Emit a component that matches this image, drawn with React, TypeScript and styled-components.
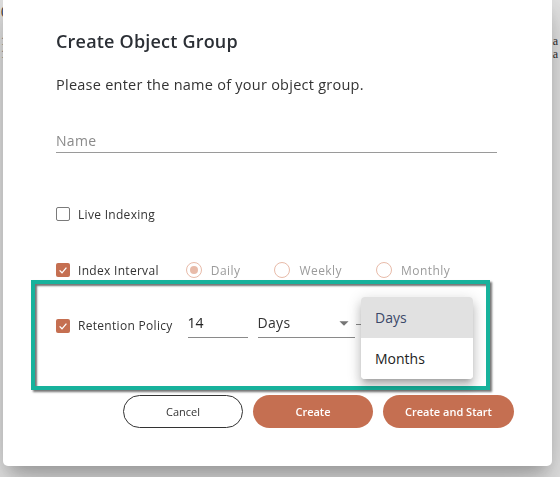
import React, { useState } from 'react'
import styled, { createGlobalStyle } from 'styled-components'

const GlobalStyle = createGlobalStyle`
  html, body {
    margin: 0;
    padding: 0;
    background: #ffffff;
  }
  * {
    box-sizing: border-box;
  }
`

const PRIMARY = '#c56f51'
const FONT = `'Open Sans', 'Noto Sans', sans-serif`

const Page = styled.div`
  font-family: 'Liberation Serif', serif;
  font-size: 12px;
  color: #333;
  height: 477px;
  overflow: hidden;
  padding: 5px 2px 0 1px;
`

const PageLine = styled.div<{ $gap?: number }>`
  display: flex;
  justify-content: space-between;
  margin-top: ${(p) => p.$gap ?? 0}px;
  line-height: 13px;
`

const Backdrop = styled.div`
  position: fixed;
  inset: 0;
  background: rgba(0, 0, 0, 0.09);
`

const DialogPaper = styled.div`
  position: absolute;
  left: 3px;
  top: -6px;
  width: 549px;
  background: #fff;
  border-radius: 5px;
  box-shadow: 0px 11px 15px -7px rgba(0, 0, 0, 0.2), 0px 24px 38px 3px rgba(0, 0, 0, 0.14),
    0px 9px 46px 8px rgba(0, 0, 0, 0.12);
  padding: 35px 55px 38px 53px;
  font-family: ${FONT};
  display: flex;
  flex-direction: column;
`

const Title = styled.h2`
  margin: 0;
  font-size: 18px;
  line-height: 24px;
  font-weight: 600;
  letter-spacing: 0.2px;
  color: #2b2f35;
`

const Subtitle = styled.p`
  margin: 22px 0 0 0;
  font-size: 14.5px;
  line-height: 20px;
  letter-spacing: 0.25px;
  color: #333;
`

const NameInput = styled.input`
  margin-top: 33px;
  height: 25px;
  border: none;
  border-bottom: 1px solid #9a9a9a;
  padding: 0;
  font-family: ${FONT};
  font-size: 14px;
  letter-spacing: 0.3px;
  color: #333;
  outline: none;
  background: transparent;

  &::placeholder {
    color: #8a8a8a;
  }
`

const OptionRow = styled.div<{ $top: number }>`
  display: flex;
  align-items: center;
  height: 20px;
  margin-top: ${(p) => p.$top}px;
`

const CheckLabel = styled.label`
  display: flex;
  align-items: center;
  gap: 8px;
  font-size: 12px;
  letter-spacing: 0.3px;
  color: #333;
  cursor: pointer;
`

const CheckBox = styled.span<{ $checked: boolean }>`
  width: 14px;
  height: 14px;
  border-radius: 2px;
  display: inline-flex;
  align-items: center;
  justify-content: center;
  background: ${(p) => (p.$checked ? PRIMARY : '#fff')};
  border: ${(p) => (p.$checked ? 'none' : '1.5px solid #7a7a7a')};
`

const RadioGroup = styled.div`
  display: flex;
  align-items: center;
  gap: 34px;
  margin-left: 27px;
`

const RadioOption = styled.label`
  display: flex;
  align-items: center;
  gap: 9px;
  font-size: 12px;
  letter-spacing: 0.45px;
  color: #9b9b9b;
`

const RadioCircle = styled.span<{ $selected: boolean }>`
  width: 16px;
  height: 16px;
  border-radius: 50%;
  border: 1.5px solid #e8bba9;
  display: inline-flex;
  align-items: center;
  justify-content: center;

  &::after {
    content: '';
    width: 8px;
    height: 8px;
    border-radius: 50%;
    background: ${(p) => (p.$selected ? '#e8bba9' : 'transparent')};
  }
`

const HighlightBox = styled.div`
  position: relative;
  margin: 0 7px 0 -25px;
  height: 110px;
  border: 4px solid #17b29c;
  box-shadow: 2px 2px 2px rgba(0, 0, 0, 0.55), inset 2px 2px 2px rgba(0, 0, 0, 0.55);
  padding: 29px 0 0 21px;
`

const RetentionRow = styled.div`
  display: flex;
  align-items: center;
  height: 25px;
`

const NumberField = styled.input`
  width: 60px;
  height: 25px;
  margin-left: 15px;
  border: none;
  border-bottom: 1px solid #8a8a8a;
  padding: 0 0 5px 0;
  font-family: ${FONT};
  font-size: 14px;
  color: #222;
  outline: none;
  background: transparent;
`

const SelectBox = styled.div`
  position: relative;
  width: 97px;
  height: 25px;
  margin-left: 10px;
  border-bottom: 1px solid #8a8a8a;
  display: flex;
  align-items: center;
  justify-content: space-between;
  padding-bottom: 5px;
  font-size: 14px;
  letter-spacing: 0.3px;
  color: #333;
`

const SelectTail = styled.span`
  width: 6px;
  height: 1px;
  background: #8a8a8a;
  margin-left: 1px;
  margin-top: -2px;
`

const Menu = styled.ul`
  position: absolute;
  left: 326px;
  top: 13px;
  width: 112px;
  margin: 0;
  padding: 0;
  list-style: none;
  background: #fff;
  border-radius: 4px;
  box-shadow: 0px 5px 5px -3px rgba(0, 0, 0, 0.2), 0px 8px 10px 1px rgba(0, 0, 0, 0.14),
    0px 3px 14px 2px rgba(0, 0, 0, 0.12);
  overflow: hidden;
`

const MenuItem = styled.li<{ $selected?: boolean }>`
  height: 41px;
  display: flex;
  align-items: center;
  padding-left: 14px;
  font-size: 14px;
  color: ${(p) => (p.$selected ? '#3b4869' : '#222')};
  background: ${(p) => (p.$selected ? '#e1e1e1' : '#fff')};
`

const Actions = styled.div`
  display: flex;
  justify-content: flex-end;
  gap: 10px;
  margin: 5px -17px 0 0;
`

const PillButton = styled.button<{ $variant: 'outline' | 'filled'; $width: number }>`
  width: ${(p) => p.$width}px;
  height: 33px;
  border-radius: 17px;
  font-family: ${FONT};
  font-size: 11px;
  font-weight: ${(p) => (p.$variant === 'filled' ? 600 : 400)};
  color: ${(p) => (p.$variant === 'filled' ? '#fff' : '#333')};
  background: ${(p) => (p.$variant === 'filled' ? PRIMARY : '#fff')};
  border: ${(p) => (p.$variant === 'filled' ? 'none' : '1px solid #333')};
  cursor: pointer;
`

function Check({ checked }: { checked: boolean }) {
  return (
    <CheckBox $checked={checked}>
      {checked && (
        <svg width="14" height="14" viewBox="0 0 14 14">
          <polyline points="3.6,7.4 6,9.8 10.4,4.6" fill="none" stroke="#fff" strokeWidth="1.3" />
        </svg>
      )}
    </CheckBox>
  )
}

export default function App(): React.ReactElement {
  const [interval] = useState('Daily')

  return (
    <>
      <GlobalStyle />
      <Page>
        <PageLine><span>(</span><span></span></PageLine>
        <PageLine $gap={17}><span>1</span><span>a</span></PageLine>
        <PageLine><span>1</span><span>a</span></PageLine>
      </Page>
      <Backdrop>
        <DialogPaper>
          <Title>Create Object Group</Title>
          <Subtitle>Please enter the name of your object group.</Subtitle>
          <NameInput placeholder="Name" />

          <OptionRow $top={51}>
            <CheckLabel><Check checked={false} />Live Indexing</CheckLabel>
          </OptionRow>

          <OptionRow $top={36}>
            <CheckLabel><Check checked={true} />Index Interval</CheckLabel>
            <RadioGroup>
              {['Daily', 'Weekly', 'Monthly'].map((opt) => (
                <RadioOption key={opt}>
                  <RadioCircle $selected={opt === interval} />
                  {opt}
                </RadioOption>
              ))}
            </RadioGroup>
          </OptionRow>

          <HighlightBox>
            <RetentionRow>
              <CheckLabel><Check checked={true} />Retention Policy</CheckLabel>
              <NumberField defaultValue="14" />
              <SelectBox>
                <span>Days</span>
                <svg width="22" height="22" viewBox="0 0 24 24">
                  <path d="M7 10l5 5 5-5z" fill="#757575" />
                </svg>
              </SelectBox>
              <SelectTail />
            </RetentionRow>
            <Menu>
              <MenuItem $selected>Days</MenuItem>
              <MenuItem>Months</MenuItem>
            </Menu>
          </HighlightBox>

          <Actions>
            <PillButton $variant="outline" $width={120}>Cancel</PillButton>
            <PillButton $variant="filled" $width={120}>Create</PillButton>
            <PillButton $variant="filled" $width={131}>Create and Start</PillButton>
          </Actions>
        </DialogPaper>
      </Backdrop>
    </>
  )
}
